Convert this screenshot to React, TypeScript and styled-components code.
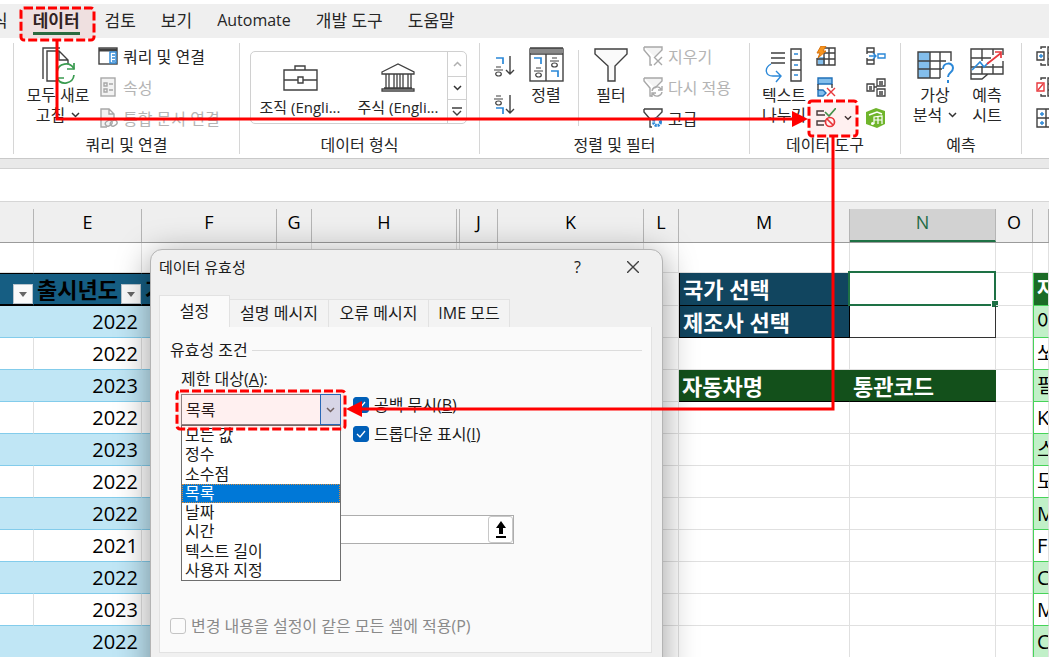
import React from "react";
import styled, { createGlobalStyle, css } from "styled-components";

const GlobalStyle = createGlobalStyle`
  *, *::before, *::after { box-sizing: border-box; }
  body {
    margin: 0;
    background: #fff;
    color: #262626;
    font-family: "Open Sans", "Noto Sans CJK KR", sans-serif;
    font-size: 16px;
  }
  button, input, select {
    font: inherit;
    color: inherit;
    margin: 0;
    padding: 0;
    border: 0;
    background: none;
  }
`;

/* ---------- shell ---------- */

const Shell = styled.div`
  position: relative;
  height: 100vh;
  overflow: hidden;
  padding-top: 4px;
`;

const TabBar = styled.nav`
  display: flex;
  align-items: center;
  gap: 25px;
  height: 34px;
  background: #efefef;
  button:first-child { margin-left: -8px; }
`;

const RibbonTab = styled.button<{ $active?: boolean; $latin?: boolean }>`
  flex: none;
  height: 28px;
  padding-top: 2px;
  line-height: 23px;
  font-size: ${(p) => (p.$latin ? 16 : 17)}px;
  font-weight: ${(p) => (p.$active ? 700 : 400)};
  border-bottom: 3px solid ${(p) => (p.$active ? "#1e7145" : "transparent")};
`;

const Ribbon = styled.div`
  display: flex;
  height: 120px;
  padding: 5px 0 4px;
  background: #fff;
  overflow: hidden;
`;

const Group = styled.section<{ $width: number }>`
  flex: none;
  width: ${(p) => p.$width}px;
  border-right: 1px solid #d6d6d6;
`;

const GroupBody = styled.div<{ $left?: number }>`
  display: flex;
  height: 93px;
  padding-left: ${(p) => p.$left ?? 0}px;
`;

const GroupLabel = styled.div`
  text-align: center;
  line-height: 18px;
  height: 18px;
`;

const BigButton = styled.button<{ $width: number }>`
  flex: none;
  display: flex;
  flex-direction: column;
  align-items: center;
  width: ${(p) => p.$width}px;
  padding-top: 4px;
  line-height: 20px;
  white-space: nowrap;
`;

const IconSlot = styled.span`
  display: flex;
  height: 38px;
`;

const Line = styled.span`
  display: flex;
  align-items: center;
  gap: 6px;
`;

const SmallColumn = styled.div<{ $left?: number }>`
  display: flex;
  flex-direction: column;
  gap: 5px;
  margin-left: ${(p) => p.$left ?? 0}px;
`;

const SmallButton = styled.button<{ $dim?: boolean }>`
  display: flex;
  align-items: center;
  gap: 5px;
  height: 26px;
  white-space: nowrap;
  color: ${(p) => (p.$dim ? "#b4b4b4" : "#262626")};
`;

const SplitButton = styled(SmallButton)`
  gap: 8px;
  width: 36px;
`;

const SortColumn = styled.div`
  display: flex;
  flex-direction: column;
  gap: 17px;
  padding-top: 12px;
  button { display: grid; height: 22px; }
`;

const InnerRule = styled.div`
  width: 1px;
  height: 76px;
  margin: 7px 14px 0 1px;
  background: #d6d6d6;
`;

const Gallery = styled.div`
  display: flex;
  width: 217px;
  height: 73px;
  margin-top: 8px;
  border: 1px solid #d0d0d0;
  border-radius: 5px;
`;

const GalleryItem = styled.button`
  flex: 1;
  display: flex;
  flex-direction: column;
  align-items: center;
  justify-content: flex-end;
  gap: 5px;
  padding-bottom: 6px;
  font-size: 15px;
  line-height: 20px;
  white-space: nowrap;
`;

const GalleryScroll = styled.div`
  display: grid;
  grid-template-rows: repeat(3, 1fr);
  width: 19px;
  border-left: 1px solid #d0d0d0;
  button { display: grid; place-items: center; }
  button + button { border-top: 1px solid #d0d0d0; }
`;

const Gap = styled.div`
  height: 11px;
  background: #e9e9e9;
  border-top: 1px solid #c9c9c9;
  border-bottom: 1px solid #d2d2d2;
`;

const FormulaBar = styled.div`
  height: 32px;
  background: #fff;
`;

/* ---------- sheet ---------- */

const Sheet = styled.table`
  width: 100%;
  table-layout: fixed;
  border-collapse: separate;
  border-spacing: 0;
  color: #000;
`;

const Col = styled.col<{ $width?: number }>`
  width: ${(p) => (p.$width ? `${p.$width}px` : "auto")};
`;

const HeadCell = styled.th<{ $active?: boolean }>`
  height: 42px;
  padding: 7px 0 0;
  background: #efefef;
  border-top: 1px solid #d6d6d6;
  border-bottom: 1px solid #9b9b9b;
  font-weight: 400;
  font-size: 18px;
  overflow: hidden;
  span {
    display: block;
    height: 33px;
    line-height: 26px;
    border-right: 1px solid #b5b5b5;
    ${(p) =>
      p.$active &&
      css`
        background: #d2d2d2;
        color: #1e6b45;
        border-bottom: 2px solid #1e7145;
      `}
  }
`;

type Kind =
  | "blank" | "car" | "band" | "year" | "navy" | "input" | "picked"
  | "green" | "listHead" | "listBand" | "list";

const kinds: Record<Kind, ReturnType<typeof css>> = {
  blank: css``,
  car: css`
    background: #165e83;
    border-right-color: #165e83;
    border-top: 1px solid #000;
    border-bottom: 2px solid #000;
    font-size: 22px;
    font-weight: 700;
  `,
  band: css`
    background: #c0e6f5;
    border-right-color: #c0e6f5;
    border-bottom-color: #83cceb;
    text-align: right;
  `,
  year: css`
    border-bottom-color: #83cceb;
    text-align: right;
  `,
  navy: css`
    background: #11455f;
    border: 1px solid #000;
    border-top-width: 0;
    color: #fff;
    font-size: 22px;
    font-weight: 700;
  `,
  input: css`
    border-color: #333;
  `,
  picked: css``,
  green: css`
    background: #13501b;
    border-right-color: #13501b;
    border-bottom-color: #000;
    color: #fff;
    font-size: 22px;
    font-weight: 700;
  `,
  listHead: css`
    background: #1b6b26;
    border-left: 1px solid #47d359;
    border-bottom-color: #47d359;
    color: #fff;
    font-weight: 700;
  `,
  listBand: css`
    background: #c1f0c8;
    border-left: 1px solid #47d359;
    border-bottom-color: #47d359;
  `,
  list: css`
    border-left: 1px solid #47d359;
    border-bottom-color: #47d359;
  `,
};

const Cell = styled.td<{ $kind: Kind; $height: number }>`
  position: relative;
  height: ${(p) => p.$height}px;
  padding: 0 3px;
  border-right: 1px solid #e0e0e0;
  border-bottom: 1px solid #e0e0e0;
  font-size: 20px;
  line-height: 26px;
  white-space: nowrap;
  overflow: ${(p) => (p.$kind === "picked" ? "visible" : "hidden")};
  ${(p) => kinds[p.$kind]}
`;

const Selection = styled.span`
  position: absolute;
  inset: -2px -1px -1px -2px;
  border: 2px solid #1e7145;
  &::after {
    content: "";
    position: absolute;
    right: -4px;
    bottom: -3px;
    width: 6px;
    height: 6px;
    background: #1e7145;
    outline: 1px solid #fff;
  }
`;

const FilterButton = styled.button`
  position: absolute;
  right: 0;
  bottom: 0;
  display: grid;
  place-items: center;
  width: 20px;
  height: 20px;
  background: #fafafa;
  border: 1px solid #b9c4cc;
`;

/* ---------- dialog ---------- */

const Dialog = styled.section`
  position: absolute;
  left: 150px;
  top: 249px;
  width: 513px;
  height: 480px;
  padding: 0 10px 0 8px;
  background: #f0f0f0;
  border: 1px solid #b4b4b4;
  border-radius: 12px;
  box-shadow: 0 6px 34px rgba(0, 0, 0, 0.4);
  color: #1a1a1a;
`;

const TitleBar = styled.header`
  display: flex;
  align-items: center;
  height: 45px;
  padding-bottom: 12px;
  h2 {
    flex: 1;
    margin: 0;
    font-size: 15px;
    font-weight: 400;
  }
  button {
    display: grid;
    place-items: center;
    width: 55px;
    height: 28px;
  }
  button:last-child { margin-right: -8px; }
`;

const Tabs = styled.div`
  display: flex;
  align-items: flex-end;
  height: 32px;
`;

const DialogTab = styled.button<{ $active?: boolean; $width: number }>`
  width: ${(p) => p.$width}px;
  height: ${(p) => (p.$active ? 32 : 28)}px;
  padding-bottom: 4px;
  background: ${(p) => (p.$active ? "#fafafa" : "#f3f3f3")};
  border: 1px solid #e2e2e2;
  border-left-width: ${(p) => (p.$active ? 1 : 0)}px;
  border-bottom-width: 0;
`;

const Panel = styled.div`
  padding: 13px 9px 16px 10px;
  background: #fafafa;
  border: 1px solid #e2e2e2;
  border-top: 0;
`;

const Legend = styled.div`
  display: flex;
  align-items: center;
  gap: 4px;
  line-height: 20px;
  &::after {
    content: "";
    flex: 1;
    height: 1px;
    background: #dcdcdc;
  }
`;

const Fields = styled.div`
  display: flex;
  flex-direction: column;
  margin: 9px 0 0 11px;
  line-height: 20px;
`;

const FieldRow = styled.div`
  display: flex;
  gap: 12px;
  margin-top: 5px;
`;

const Combo = styled.div`
  position: relative;
  display: grid;
  width: 160px;
  height: 31px;
  select, span.arrow { grid-area: 1 / 1; }
  select {
    appearance: none;
    padding: 0 24px 0 4px;
    background: #fff;
    border: 1px solid #8a8a8a;
  }
  span.arrow {
    justify-self: end;
    display: grid;
    place-items: center;
    width: 21px;
    background: #d5e3f5;
    border: 1px solid #1b6ec2;
    pointer-events: none;
  }
`;

const Options = styled.ul`
  position: absolute;
  left: 0;
  top: 31px;
  display: grid;
  grid-template-rows: repeat(8, 1fr);
  width: 160px;
  height: 156px;
  margin: 0;
  padding: 0;
  list-style: none;
  line-height: 19px;
  background: #fff;
  border: 1px solid #6e6e6e;
`;

const Option = styled.li<{ $picked?: boolean }>`
  padding-left: 3px;
  ${(p) =>
    p.$picked &&
    css`
      background: #0078d7;
      color: #fff;
      outline: 1px dotted #d98a3a;
      outline-offset: -1px;
    `}
`;

const Checks = styled.div`
  display: flex;
  flex-direction: column;
  gap: 9px;
  height: 50px;
  padding-top: 1px;
`;

const CheckLabel = styled.label<{ $dim?: boolean; $top?: number }>`
  display: flex;
  align-items: center;
  gap: 5px;
  margin-top: ${(p) => p.$top ?? 0}px;
  line-height: 20px;
  color: ${(p) => (p.$dim ? "#8a8a8a" : "#1a1a1a")};
`;

const Box = styled.span`
  display: grid;
  place-items: center;
  input, svg { grid-area: 1 / 1; }
  svg { pointer-events: none; }
  input {
    appearance: none;
    width: 16px;
    height: 16px;
    border: 1px solid #c4c4c4;
    border-radius: 3px;
    background: #fbfbfb;
  }
  input:checked {
    background: #005fb8;
    border-color: #005fb8;
  }
`;

const SourceField = styled.div`
  display: flex;
  align-items: center;
  width: 333px;
  height: 29px;
  margin-top: 71px;
  background: #fff;
  border: 1px solid #adadad;
  input { flex: 1; min-width: 0; height: 100%; }
  button {
    display: grid;
    place-items: center;
    width: 25px;
    height: 27px;
    border: 1px solid #c8c8c8;
    border-radius: 3px;
  }
`;

const Callouts = styled.svg`
  position: absolute;
  left: 0;
  top: 0;
  pointer-events: none;
`;

/* ---------- icons ---------- */

const Svg = ({ w, h, children }: { w: number; h: number; children: React.ReactNode }) => (
  <svg width={w} height={h} viewBox={`0 0 ${w} ${h}`} fill="none" stroke="#404040" strokeWidth="1.4" aria-hidden="true">
    {children}
  </svg>
);

const Chevron = ({ color = "#333", up = false, size = 9 }: { color?: string; up?: boolean; size?: number }) => (
  <svg width={size} height="6" viewBox="0 0 9 6" fill="none" stroke={color} strokeWidth="1.5" aria-hidden="true">
    <path d={up ? "M1 5 4.500 1.500 8 5" : "M1 1 4.500 4.500 8 1"} />
  </svg>
);

const RefreshAll = () => (
  <Svg w={36} h={37}>
    <path d="M20 1H3v31M18 34H7V4h12l9 9v4M19 4v9h9" />
    <g stroke="#3a9b50" strokeWidth="1.700">
      <path d="M17 25a9 9 0 0 1 17-3M34 28a9 9 0 0 1-17 3" />
      <path d="M34 16v6h-7M17 37v-6h7" />
    </g>
  </Svg>
);

const QueryPane = () => (
  <Svg w={20} h={18}>
    <rect x="1" y="1" width="18" height="16" />
    <path d="M1 3h18" strokeWidth="3" />
    <rect x="12" y="5" width="6" height="11" stroke="#2b88d8" />
    <path d="M14 8h3M14 11h3M14 14h3" stroke="#2b88d8" />
  </Svg>
);

const Properties = () => (
  <Svg w={20} h={20}>
    <g stroke="#a8a8a8">
      <rect x="3" y="1" width="14" height="18" fill="#f3f3f3" />
      <path d="M6 6h3v3H6zM6 12h3v3H6zM11 7h4M11 13h4" />
    </g>
  </Svg>
);

const EditLinks = () => (
  <Svg w={20} h={20}>
    <g stroke="#a8a8a8">
      <path d="M9 19H3V1h8l5 5v5M11 1v5h5" fill="#f3f3f3" />
      <rect x="7" y="13" width="7" height="5" rx="2.500" transform="rotate(-30 10 15)" />
      <rect x="12" y="13" width="7" height="5" rx="2.500" transform="rotate(-30 15 15)" />
    </g>
  </Svg>
);

const Briefcase = () => (
  <Svg w={36} h={28}>
    <path d="M2 6h33v20H2zM2 16h14M21 16h14" />
    <path d="M13 6V2h10v4M16 13h5v6h-5z" />
  </Svg>
);

const Bank = () => (
  <Svg w={36} h={30}>
    <path d="M2 10 18 2l16 8v2H2zM6 12v14M9 12v14M14 12v14M17 12v14M20 12v14M23 12v14M28 12v14M31 12v14M4 26h28M2 29h32v-2H2z" strokeWidth="1.300" />
  </Svg>
);

const giyeok = (x: number, y: number) => (
  <path d={`M${x} ${y}h7v6`} stroke="#2b88d8" strokeWidth="1.700" />
);
const hieut = (x: number, y: number) => (
  <g strokeWidth="1.200">
    <path d={`M${x + 2} ${y}h5M${x} ${y + 3}h9`} />
    <ellipse cx={x + 4.5} cy={y + 7} rx="2.800" ry="2" />
  </g>
);

const SortAsc = () => (
  <Svg w={22} h={22}>
    {giyeok(3, 3)}
    {hieut(1, 12)}
    <path d="M17 1v18M13 15l4 4 4-4" />
  </Svg>
);
const SortDesc = () => (
  <Svg w={22} h={22}>
    {hieut(1, 2)}
    {giyeok(3, 14)}
    <path d="M17 1v18M13 15l4 4 4-4" />
  </Svg>
);
const SortDialog = () => (
  <Svg w={36} h={36}>
    <rect x="2" y="2" width="33" height="32" />
    <path d="M2 4h33" stroke="#8a8a8a" strokeWidth="4" />
    <path d="M2 1h33M2 7h33M18 7v27" />
    {giyeok(6, 11)}
    {hieut(6, 21)}
    {hieut(22, 11)}
    {giyeok(23, 24)}
  </Svg>
);
const Funnel = () => (
  <Svg w={36} h={36}>
    <path d="M2 2h32v5L22 19v15h-7V19L2 7z" fill="#fafafa" />
  </Svg>
);
const SmallFunnel = ({ kind }: { kind: "clear" | "again" | "more" }) => {
  const c = kind === "more" ? "#404040" : "#a8a8a8";
  return (
    <Svg w={20} h={20}>
      <path d="M1 1h18v3l-7 7M1 1v3l6 7v8h2" stroke={c} fill={kind === "more" ? "none" : "#f3f3f3"} />
      {kind === "clear" && <path d="M11 11l8 8M19 11l-8 8" stroke={c} />}
      {kind === "again" && <path d="M9 14a5 5 0 0 1 9-2M19 9v4h-4M19 15a5 5 0 0 1-9 2M9 20v-4h4" stroke={c} />}
      {kind === "more" && <circle cx="14" cy="14" r="3.500" stroke="#2b88d8" strokeWidth="3" strokeDasharray="2 .8" />}
    </Svg>
  );
};
const TextToColumns = () => (
  <Svg w={38} h={36}>
    <path d="M6 6h14M6 11h14M6 16h14M26 2h10v32H26zM26 13h10M26 23h10" />
    <path d="M29 7h4M29 18h4M29 28h4M6 17C-1 21 0 29 8 29h7M11 24l5 5-5 6" stroke="#2b88d8" />
  </Svg>
);
const FlashFill = () => (
  <Svg w={20} h={20}>
    <path d="M2 11h7v8H2z" fill="#83beec" stroke="none" />
    <path d="M8 2h11v17H1v-7M1 13h18M8 7h11M8 7v12M13 2v17" />
    <path d="M5 0h5L7 5h3L2 12l2-5H1z" fill="#f7941d" stroke="#d9730d" strokeWidth="1" />
  </Svg>
);
const RemoveDuplicates = () => (
  <Svg w={20} h={20}>
    <path d="M2 1h14v6H2zM2 13h5l3 3-3 3H2z" fill="#83beec" stroke="#2170b8" />
    <path d="M2 7v6M16 7v4" />
    <path d="M11 11l8 8M19 11l-8 8" stroke="#e8383d" />
  </Svg>
);
const Validation = () => (
  <Svg w={20} h={20}>
    <path d="M8 3H1v4h8M9 13H1v4h7" />
    <path d="M9 4l4 4 7-8" stroke="#3a9b50" strokeWidth="1.700" />
    <circle cx="14" cy="14" r="4.500" stroke="#e8383d" strokeWidth="1.700" />
    <path d="M11 11l6 6" stroke="#e8383d" strokeWidth="1.700" />
  </Svg>
);
const Consolidate = () => (
  <Svg w={20} h={20}>
    <path d="M1 6V2h7v4zM1 14v4h7v-4zM1 6v2M8 6v2M1 12v2M8 12v2" />
    <path d="M3 10h7M7 7l3 3-3 3M12 8h7v4h-7z" stroke="#2b88d8" />
  </Svg>
);
const Relationships = () => (
  <Svg w={20} h={20}>
    <path d="M1 7h7v7H1zM11 2h8v7h-8zM11 12h8v7h-8zM8 10h3M3 10h3M3 12h3M13 5h4M13 7h4M13 15h4M13 17h4" strokeWidth="1.300" />
  </Svg>
);
const DataModel = () => (
  <Svg w={20} h={20}>
    <path d="M0 4 10 0l9 3v13l-8 4-11-4z" fill="#6fb52c" stroke="none" />
    <path d="M3 7 11 4l5 2" stroke="#fff" strokeWidth="1.400" />
    <path d="M8 16v-7l8-1v8M8 12h8M12 9v7" stroke="#fff" strokeWidth="1.200" />
    <circle cx="6.500" cy="15.500" r="1.500" fill="#fff" stroke="none" />
  </Svg>
);
const WhatIf = () => (
  <Svg w={38} h={36}>
    <path d="M2 5h12v26H2z" fill="#83beec" stroke="none" />
    <path d="M24 31H2V5h33v9M2 14h28M2 22h24M14 5v26M24 5v26" />
    <path d="M27 22c0-7 10-7 10-1 0 5-5 4-5 9M32 33v3" stroke="#2b88d8" strokeWidth="2" />
  </Svg>
);
const Forecast = () => (
  <Svg w={36} h={36}>
    <path d="M34 14v13H19l-6 5H2V2h32v6M2 11h20M2 20h32M13 2v12M24 2v6M13 19v8M24 17v10M2 27h17" />
    <path d="M3 23l8-8 4 5 5-5" stroke="#2b88d8" strokeWidth="1.700" />
    <path d="M18 17l14-11M26 5h6v6" stroke="#e8383d" strokeWidth="1.700" />
  </Svg>
);
const Outline = ({ kind }: { kind: "group" | "ungroup" | "sub" }) => (
  <Svg w={20} h={20}>
    {kind === "sub" ? (
      <>
        <path d="M1 1h18v18H1zM1 10h18M10 1v18" />
        <path d="M4 6h4M6 4v4M4 15h4M6 13v4" stroke="#2b88d8" />
      </>
    ) : (
      <>
        <path d="M5 3V1h5M5 17v2h5M12 1h7v18h-7zM12 7h7M12 13h7" />
        <path d="M1 6h7v8H1z" stroke={kind === "group" ? "#404040" : "#e8383d"} />
        {kind === "group" ? <path d="M3 10h4M5 8v4" stroke="#2b88d8" /> : <path d="M2 13l5-6" stroke="#e8383d" />}
      </>
    )}
  </Svg>
);

/* ---------- data ---------- */

const columns: [string, number | undefined][] = [
  ["", 34], ["E", 108], ["F", 135], ["G", 35], ["H", 145], ["", 3], ["J", 38],
  ["K", 146], ["L", 35], ["M", 171], ["N", 146], ["O", 37], ["", undefined],
];

const years = ["2022", "2022", "2023", "2022", "2023", "2022", "2022", "2021", "2022", "2023", "2022"];
const list = ["아반떼", "쏘나타", "필랑트", "K5", "스포티지", "모닝", "Malibu", "Ford", "Camry", "Mustang", "Civic"];

const right: Record<number, [Kind, string, Kind, string]> = {
  1: ["navy", "국가 선택", "picked", ""],
  2: ["navy", "제조사 선택", "input", ""],
  4: ["green", "자동차명", "green", "통관코드"],
};

const SheetRow = ({ index }: { index: number }) => {
  const height = index === 0 ? 30 : index === 1 ? 33 : 32;
  const cell = (kind: Kind, key: number, content?: React.ReactNode) => (
    <Cell key={key} $kind={kind} $height={height}>{content}</Cell>
  );
  const filter = (name: string) => (
    <FilterButton aria-label={name}>
      <svg width="8" height="5" viewBox="0 0 8 5" aria-hidden="true"><path d="M0 0h8L4 5z" fill="#666" /></svg>
    </FilterButton>
  );
  const head = index === 1;
  const carKind: Kind = index === 0 ? "blank" : head ? "car" : index % 2 === 0 ? "band" : "year";
  const r = right[index] ?? ["blank", "", "blank", ""];
  const listKind: Kind = index === 0 ? "blank" : head ? "listHead" : index % 2 === 0 ? "listBand" : "list";
  return (
    <tr>
      {cell(carKind, 0, head && filter("필터 D"))}
      {cell(carKind, 1, head ? <>출시년도{filter("필터 E")}</> : years[index - 2])}
      {cell(carKind, 2, head && "가격")}
      {[3, 4, 5, 6, 7].map((k) => cell(carKind, k))}
      {cell("blank", 8)}
      {cell(r[0], 9, r[1])}
      {cell(r[2], 10, r[2] === "picked" ? <Selection /> : r[3])}
      {cell("blank", 11)}
      {cell(listKind, 12, index === 0 ? "" : head ? "자동차" : list[index - 2])}
    </tr>
  );
};

const options = ["모든 값", "정수", "소수점", "목록", "날짜", "시간", "텍스트 길이", "사용자 지정"];

const Check = () => (
  <svg width="10" height="8" viewBox="0 0 10 8" fill="none" stroke="#fff" strokeWidth="1.300" aria-hidden="true">
    <path d="M1 4l3 3 5-6" />
  </svg>
);

export default function App() {
  return (
    <Shell>
      <GlobalStyle />
      <TabBar>
        <RibbonTab>식</RibbonTab>
        <RibbonTab $active>데이터</RibbonTab>
        <RibbonTab>검토</RibbonTab>
        <RibbonTab>보기</RibbonTab>
        <RibbonTab $latin>Automate</RibbonTab>
        <RibbonTab>개발 도구</RibbonTab>
        <RibbonTab>도움말</RibbonTab>
      </TabBar>

      <Ribbon>
        <Group $width={14} />
        <Group $width={226}>
          <GroupBody $left={8}>
            <BigButton $width={72}>
              <IconSlot><RefreshAll /></IconSlot>
              <Line>모두 새로</Line>
              <Line>고침 <Chevron /></Line>
            </BigButton>
            <SmallColumn $left={4}>
              <SmallButton><QueryPane />쿼리 및 연결</SmallButton>
              <SmallButton $dim><Properties />속성</SmallButton>
              <SmallButton $dim><EditLinks />통합 문서 연결</SmallButton>
            </SmallColumn>
          </GroupBody>
          <GroupLabel>쿼리 및 연결</GroupLabel>
        </Group>
        <Group $width={240}>
          <GroupBody $left={10}>
            <Gallery>
              <GalleryItem><Briefcase />조직 (Engli...</GalleryItem>
              <GalleryItem><Bank />주식 (Engli...</GalleryItem>
              <GalleryScroll>
                <button aria-label="위로"><Chevron up color="#b0b0b0" /></button>
                <button aria-label="아래로"><Chevron /></button>
                <button aria-label="자세히">
                  <Svg w={10} h={9}><path d="M0 1h10M1 4l4 4 4-4" /></Svg>
                </button>
              </GalleryScroll>
            </Gallery>
          </GroupBody>
          <GroupLabel>데이터 형식</GroupLabel>
        </Group>
        <Group $width={270}>
          <GroupBody $left={13}>
            <SortColumn>
              <button aria-label="오름차순"><SortAsc /></button>
              <button aria-label="내림차순"><SortDesc /></button>
            </SortColumn>
            <BigButton $width={62}>
              <IconSlot><SortDialog /></IconSlot>
              <Line>정렬</Line>
            </BigButton>
            <InnerRule />
            <BigButton $width={36}>
              <IconSlot><Funnel /></IconSlot>
              <Line>필터</Line>
            </BigButton>
            <SmallColumn $left={14}>
              <SmallButton $dim><SmallFunnel kind="clear" />지우기</SmallButton>
              <SmallButton $dim><SmallFunnel kind="again" />다시 적용</SmallButton>
              <SmallButton><SmallFunnel kind="more" />고급</SmallButton>
            </SmallColumn>
          </GroupBody>
          <GroupLabel>정렬 및 필터</GroupLabel>
        </Group>
        <Group $width={151}>
          <GroupBody $left={11}>
            <BigButton $width={46}>
              <IconSlot><TextToColumns /></IconSlot>
              <Line>텍스트</Line>
              <Line>나누기</Line>
            </BigButton>
            <SmallColumn $left={9}>
              <SmallButton aria-label="빠른 채우기"><FlashFill /></SmallButton>
              <SmallButton aria-label="중복된 항목 제거"><RemoveDuplicates /></SmallButton>
              <SplitButton aria-label="데이터 유효성 검사"><Validation /><Chevron size={8} /></SplitButton>
            </SmallColumn>
            <SmallColumn $left={14}>
              <SmallButton aria-label="통합"><Consolidate /></SmallButton>
              <SmallButton aria-label="관계"><Relationships /></SmallButton>
              <SmallButton aria-label="데이터 모델"><DataModel /></SmallButton>
            </SmallColumn>
          </GroupBody>
          <GroupLabel>데이터 도구</GroupLabel>
        </Group>
        <Group $width={121}>
          <GroupBody $left={8}>
            <BigButton $width={52}>
              <IconSlot><WhatIf /></IconSlot>
              <Line>가상</Line>
              <Line>분석 <Chevron /></Line>
            </BigButton>
            <BigButton $width={52}>
              <IconSlot><Forecast /></IconSlot>
              <Line>예측</Line>
              <Line>시트</Line>
            </BigButton>
          </GroupBody>
          <GroupLabel>예측</GroupLabel>
        </Group>
        <SmallColumn $left={14}>
          <SmallButton aria-label="그룹"><Outline kind="group" /></SmallButton>
          <SmallButton aria-label="그룹 해제"><Outline kind="ungroup" /></SmallButton>
          <SmallButton aria-label="부분합"><Outline kind="sub" /></SmallButton>
        </SmallColumn>
      </Ribbon>
      <Gap />
      <FormulaBar />

      <Sheet>
        <colgroup>
          {columns.map(([, width], i) => <Col key={i} $width={width} />)}
        </colgroup>
        <thead>
          <tr>
            {columns.map(([name], i) => (
              <HeadCell key={i} $active={name === "N"}><span>{name}</span></HeadCell>
            ))}
          </tr>
        </thead>
        <tbody>
          {Array.from({ length: 13 }, (_, i) => <SheetRow key={i} index={i} />)}
        </tbody>
      </Sheet>

      <Dialog role="dialog" aria-label="데이터 유효성">
        <TitleBar>
          <h2>데이터 유효성</h2>
          <button aria-label="도움말">?</button>
          <button aria-label="닫기">
            <Svg w={12} h={12}><path d="M0 0l12 12M12 0L0 12" /></Svg>
          </button>
        </TitleBar>
        <Tabs>
          <DialogTab $active $width={71}>설정</DialogTab>
          <DialogTab $width={99}>설명 메시지</DialogTab>
          <DialogTab $width={100}>오류 메시지</DialogTab>
          <DialogTab $width={81}>IME 모드</DialogTab>
        </Tabs>
        <Panel>
          <Legend>유효성 조건</Legend>
          <Fields>
            <label htmlFor="allow">제한 대상(<u>A</u>):</label>
            <FieldRow>
              <Combo>
                <select id="allow" defaultValue="목록">
                  {options.map((o) => <option key={o}>{o}</option>)}
                </select>
                <span className="arrow"><Chevron color="#666" size={11} /></span>
                <Options>
                  {options.map((o) => <Option key={o} $picked={o === "목록"}>{o}</Option>)}
                </Options>
              </Combo>
              <Checks>
                <CheckLabel>
                  <Box><input type="checkbox" defaultChecked /><Check /></Box>
                  <span>공백 무시(<u>B</u>)</span>
                </CheckLabel>
                <CheckLabel>
                  <Box><input type="checkbox" defaultChecked /><Check /></Box>
                  <span>드롭다운 표시(<u>I</u>)</span>
                </CheckLabel>
              </Checks>
            </FieldRow>
            <SourceField>
              <input aria-label="원본" />
              <button aria-label="범위 선택">
                <svg width="12" height="18" viewBox="0 0 12 18" aria-hidden="true">
                  <path d="M6 0l5 7H8v6H4V7H1zM1 15h10v2H1z" fill="#000" />
                </svg>
              </button>
            </SourceField>
          </Fields>
          <CheckLabel $dim $top={72}>
            <Box><input type="checkbox" disabled /></Box>
            <span>변경 내용을 설정이 같은 모든 셀에 적용(P)</span>
          </CheckLabel>
        </Panel>
      </Dialog>

      <Callouts width="1049" height="657" viewBox="0 0 1049 657" fill="none" stroke="#f00" strokeWidth="3" aria-hidden="true">
        <g fill="#f00" fillOpacity="0.06" strokeDasharray="9 3">
          <rect x="21" y="8" width="73" height="32" rx="3" />
          <rect x="809" y="101" width="48" height="35" rx="3" />
          <rect x="177" y="391" width="168" height="38" rx="3" />
        </g>
        <path d="M57 41v78h738M833 137v272H360" />
        <path d="M792 111v16l16-8zM362 401v16l-16-8z" fill="#f00" stroke="none" />
      </Callouts>
    </Shell>
  );
}
